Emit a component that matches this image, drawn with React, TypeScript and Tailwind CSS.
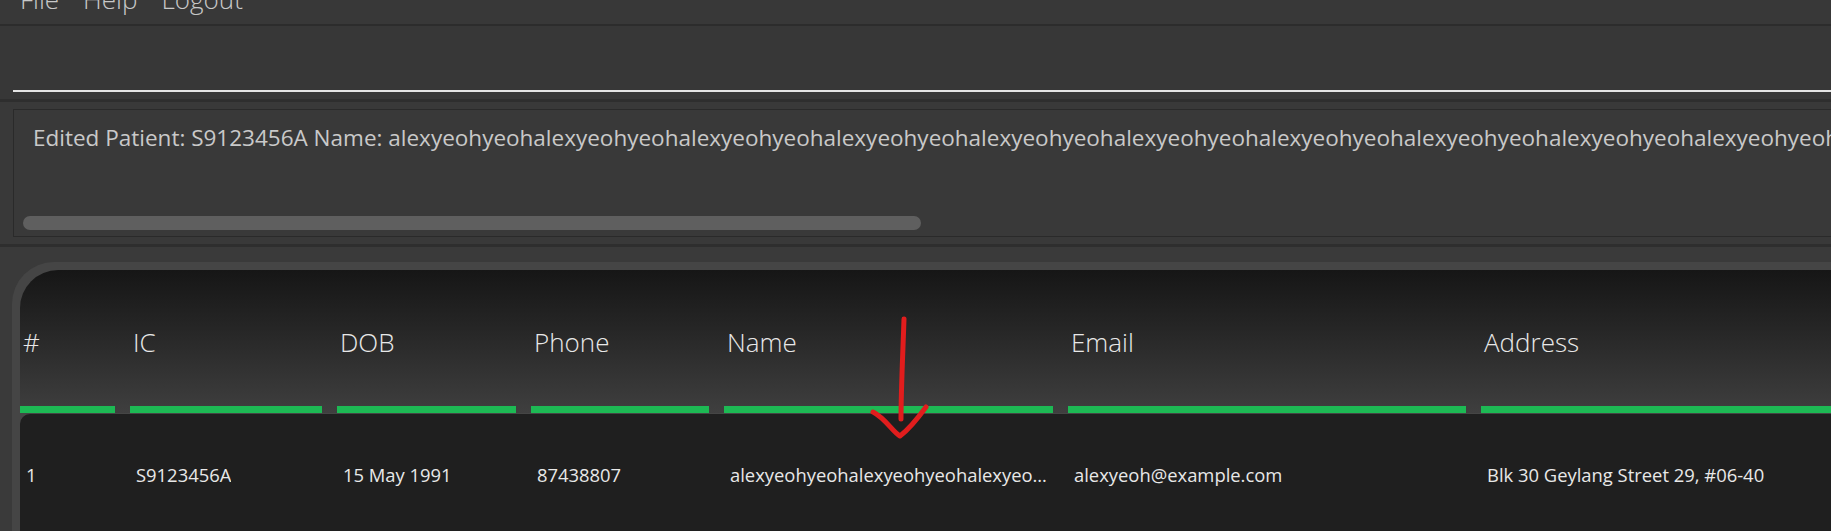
const columns = [
  { head: "#", value: "1", width: "w-[95px]" },
  { head: "IC", value: "S9123456A", width: "w-[192px]" },
  { head: "DOB", value: "15 May 1991", width: "w-[179px]" },
  { head: "Phone", value: "87438807", width: "w-[178px]" },
  {
    head: "Name",
    value: "alexyeohyeohalexyeohyeohalexyeohyeohalexyeohyeohalexyeohyeoh",
    width: "w-[329px]",
  },
  { head: "Email", value: "alexyeoh@example.com", width: "w-[398px]" },
  { head: "Address", value: "Blk 30 Geylang Street 29, #06-40", width: "flex-1" },
];

const longName = Array(14).fill("alexyeohyeoh").join("");

const App = () => {
  return (
    <div className="relative w-[1831px] h-[531px] overflow-hidden bg-[#383838] font-['Open_Sans',sans-serif]">
      {/* Menu bar */}
      <div className="h-[26px] border-b-2 border-[#2c2c2c] bg-[#383838] overflow-hidden">
        <div className="flex gap-[24px] pl-[20px] -mt-[14px] text-[26px] leading-[26px] font-light text-[#c8c8c8]">
          <span>File</span>
          <span>Help</span>
          <span>Logout</span>
        </div>
      </div>

      {/* Command box */}
      <div className="h-[76px] border-b-[3px] border-[#2e2e2e] bg-[#373737] pt-[64px] pl-[13px]">
        <div className="h-[2px] bg-[#e4e4e4]" />
      </div>

      {/* Result display */}
      <div className="h-[145px] border-b-[3px] border-[#2e2e2e] bg-[#393939] pt-[7px] pl-[13px]">
        <div className="w-[1840px] h-[128px] border border-[#2a2a2a] bg-[#393939] flex flex-col overflow-hidden">
          <div className="pl-[19px] pt-[14px] h-[106px] whitespace-nowrap text-[22.5px] leading-[28px] text-[#c9c9c9]">
            Edited Patient: S9123456A Name: {longName}
          </div>
          <div className="pl-[9px]">
            <div className="w-[898px] h-[14px] rounded-full bg-[#5f5f5f]" />
          </div>
        </div>
      </div>

      {/* Patient table */}
      <div className="h-[284px] bg-[#3a3a3a] pt-[15px] pl-[12px]">
        <div className="h-full rounded-tl-[42px] bg-[#454545] pt-[8px] pl-[8px] flex flex-col">
          <div className="flex gap-[15px] rounded-tl-[38px] bg-linear-to-b from-[#161616] to-[#3f3f3f]">
            {columns.map((c) => (
              <div key={c.head} className={`${c.width} flex flex-col`}>
                <div className="h-[136px] flex items-center pl-[3px] pt-[8px] text-[26px] font-light text-[#e8e8e8]">
                  {c.head}
                </div>
                <div className="h-[7px] bg-[#1db954]" />
              </div>
            ))}
          </div>
          <div className="mt-[1px] flex-1 flex gap-[15px] rounded-tl-[10px] bg-[#1f1f1f]">
            {columns.map((c) => (
              <div
                key={c.head}
                className={`${c.width} h-[122px] flex items-center pl-[6px] text-[18.4px] text-[#e8e8e8] min-w-0`}
              >
                <span className="truncate">{c.value}</span>
              </div>
            ))}
          </div>
        </div>
      </div>

      {/* Red annotation arrow */}
      <svg
        className="absolute left-[860px] top-[310px]"
        width="80"
        height="140"
        viewBox="0 0 80 140"
        fill="none"
        stroke="#e11d1d"
        strokeWidth="5"
        strokeLinecap="round"
        strokeLinejoin="round"
      >
        <path d="M44 9 C43 40 41 80 41 109" />
        <path d="M13 102 C25 108 33 122 40 126 C48 120 58 108 66 97" />
      </svg>
    </div>
  );
};

export default App;
